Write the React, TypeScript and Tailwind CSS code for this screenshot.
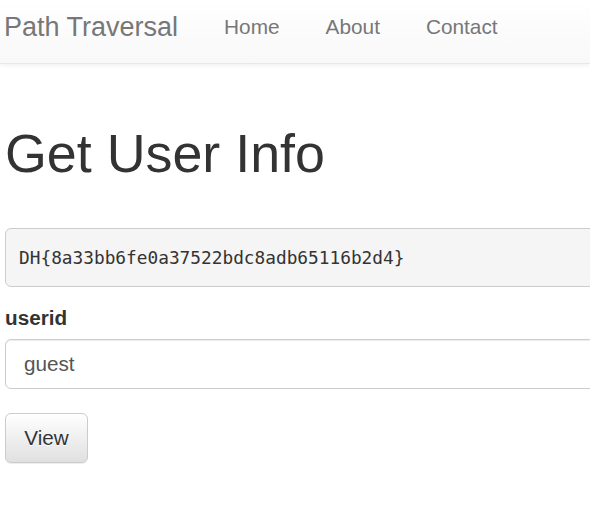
import React from "react";

// Bootstrap-3-theme look, rendered at ~1.48x zoom; the form column is wider than the window.
const NAV_LINKS = ["Home", "About", "Contact"];

export default function App() {
  return (
    <div className="min-h-[529px] w-full overflow-hidden bg-white font-['Liberation_Sans',Arial,sans-serif] text-[#333]">
      {/* Navbar */}
      <nav className="flex h-[64px] items-start border-b border-[#e7e7e7] bg-gradient-to-b from-white to-[#f8f8f8] shadow-[0_1px_5px_rgba(0,0,0,0.075)]">
        <a className="block pl-[4px] pr-[23px] pt-[12px] text-[27px] leading-[30px] text-[#777]">
          Path Traversal
        </a>
        <ul className="flex">
          {NAV_LINKS.map((label) => (
            <li key={label}>
              <a className="block px-[23px] pt-[12px] text-[20.8px] leading-[30px] text-[#777]">{label}</a>
            </li>
          ))}
        </ul>
      </nav>

      {/* Page body */}
      <main className="w-[740px] pl-[5px]">
        <h1 className="mt-[60px] text-[53.8px] font-normal leading-[58.6px]">Get User Info</h1>

        <pre className="mt-[45px] rounded-[6px] border border-[#ccc] bg-[#f5f5f5] px-[13px] py-[16px] font-['DejaVu_Sans_Mono',monospace] text-[17.8px] leading-[25px] text-[#333]">
          DH{"{"}8a33bb6fe0a37522bdc8adb65116b2d4{"}"}
        </pre>

        <form className="mt-[16px]" onSubmit={(e) => e.preventDefault()}>
          <label className="mb-[6px] block text-[20.7px] font-bold leading-[30px]">userid</label>
          <input
            defaultValue="guest"
            className="block h-[50px] w-full rounded-[6px] border border-[#ccc] bg-white px-[18px] pt-[1px] text-[20.7px] text-[#555] shadow-[inset_0_1px_1px_rgba(0,0,0,0.075)] outline-none"
          />
          <button
            type="submit"
            className="mt-[24px] block h-[50px] w-[83px] rounded-[6px] border border-[#ccc] bg-gradient-to-b from-white to-[#e0e0e0] text-[20.7px] text-[#333] shadow-[0_1px_1px_rgba(0,0,0,0.075)] [text-shadow:0_1px_0_#fff]"
          >
            View
          </button>
        </form>
      </main>
    </div>
  );
}
